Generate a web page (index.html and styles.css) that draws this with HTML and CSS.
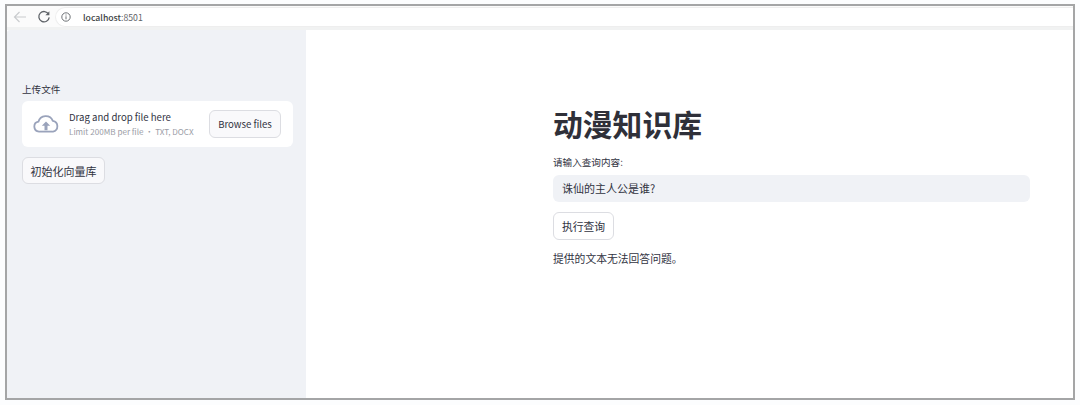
FILE: index.html
```html
<!DOCTYPE html>
<html lang="zh">
<head>
<meta charset="utf-8">
<title>动漫知识库</title>
<link rel="stylesheet" href="styles.css">
</head>
<body>
<div class="frame">
  <header class="toolbar">
    <svg class="nav-back" width="16" height="14" viewBox="0 0 16 14"><path d="M14 7H2.5M7.5 2 2.5 7l5 5" fill="none" stroke="#c9cbce" stroke-width="1.2"/></svg>
    <svg class="nav-reload" width="14" height="14" viewBox="0 0 14 14"><path d="M11.6 4.2A5.2 5.2 0 1 0 12.2 7.4" fill="none" stroke="#5f6368" stroke-width="1.3"/><path d="M12.4 1.2v4H8.4z" fill="#5f6368"/></svg>
    <div class="url">
      <svg width="10" height="10" viewBox="0 0 10 10"><circle cx="5" cy="5" r="4.2" fill="none" stroke="#5f6368" stroke-width="0.9"/><path d="M5 4.3v3M5 2.5v1" stroke="#5f6368" stroke-width="0.9"/></svg>
      <span class="url-text">localhost<span class="url-port">:8501</span></span>
    </div>
  </header>
  <div class="app">
    <aside class="sidebar">
      <div class="upload-label">上传文件</div>
      <div class="dropzone">
        <svg class="cloud" width="26" height="18" viewBox="0 0 26 18"><path d="M7 16.6H6A5 5 0 0 1 5.4 6.7 7.6 7.6 0 0 1 19.8 5.8 5.5 5.5 0 0 1 20 16.6H19" fill="none" stroke="#9aa3bb" stroke-width="1.8"/><path d="M7 16.6H19" stroke="#9aa3bb" stroke-width="1.8"/><path d="M13 6.4 8.8 10.8h2.7v4.4h3v-4.4h2.7z" fill="#9aa3bb"/></svg>
        <div class="drop-text">
          <div class="drop-title">Drag and drop file here</div>
          <div class="drop-limit">Limit 200MB per file • TXT, DOCX</div>
        </div>
        <button class="btn btn-browse">Browse files</button>
      </div>
      <button class="btn btn-init">初始化向量库</button>
    </aside>
    <main class="main">
      <div class="column">
        <h1 class="title">动漫知识库</h1>
        <label class="query-label">请输入查询内容:</label>
        <div class="query-input">诛仙的主人公是谁?</div>
        <button class="btn btn-run">执行查询</button>
        <p class="answer">提供的文本无法回答问题。</p>
      </div>
    </main>
  </div>
</div>
</body>
</html>
```
FILE: styles.css
```css
* { box-sizing: border-box; }
html, body { margin: 0; height: 100%; background: #fcfdfe; overflow: hidden; }
body {
  padding: 4px 5px 5px 5px;
  font-family: "Noto Sans CJK SC", "Noto Sans", sans-serif;
  color: #31333f;
}
.frame {
  height: 396px;
  border: 2px solid #a4a5a6;
  background: #fff;
  display: flex;
  flex-direction: column;
}
.toolbar {
  height: 24px;
  flex: none;
  background: #fbfbfb;
  border-bottom: 3px solid #f1f2f2;
  display: flex;
  align-items: center;
  padding-left: 5px;
}
.nav-back { margin-right: 9px; }
.nav-reload { margin-right: 4px; }
.url {
  flex: 1;
  height: 20px;
  margin-top: 1px;
  background: #fff;
  border: 1px solid #eeeeee;
  border-right: 0;
  border-radius: 10px 0 0 10px;
  display: flex;
  align-items: center;
  gap: 7px;
  padding-left: 5px;
  font-size: 8.7px;
}
.url svg { flex: none; margin-right: 5px; }
.url-text { color: #3c3f43; font-weight: 500; }
.url-port { color: #5f6368; font-weight: 400; }
.app { flex: 1; display: flex; min-height: 0; }
.sidebar {
  width: 299px;
  flex: none;
  background: #f0f2f6;
  border-top-left-radius: 3px;
  padding: 52px 13px 0 15px;
}
.upload-label { font-size: 9.6px; line-height: 14px; margin-bottom: 5px; }
.dropzone {
  height: 46px;
  background: #fff;
  border-radius: 6px;
  display: flex;
  align-items: center;
  padding: 0 12px 0 11px;
}
.cloud { flex: none; margin: 0 10px 0 0; }
.drop-text { flex: 1; }
.drop-title { font-size: 9.6px; line-height: 14px; color: #31333f; margin-bottom: 2px; }
.drop-limit { font-size: 8.1px; line-height: 12px; color: #9a9ca6; white-space: nowrap; }
.btn {
  font-family: inherit;
  color: #31333f;
  background: #fff;
  border: 1px solid #dcdde2;
  border-radius: 6px;
  padding: 0;
  display: block;
}
.btn-browse { width: 72px; height: 28px; font-size: 9.6px; background: #f9f9fb; flex: none; }
.btn-init { width: 83px; height: 27px; margin-top: 10px; font-size: 11px; background: #f9f9fb; }
.main { flex: 1; min-width: 0; }
.column { width: 477px; margin-left: 247px; padding-top: 72px; }
.title { margin: 0; font-size: 29.8px; line-height: 42px; font-weight: 700; color: #2f3039; }
.query-label { display: block; font-size: 9.6px; line-height: 14px; margin-top: 11px; }
.query-input {
  height: 27px;
  margin-top: 6px;
  background: #f0f2f6;
  border-radius: 6px;
  padding-left: 9px;
  font-size: 11px;
  line-height: 26px;
}
.btn-run { width: 61px; height: 28px; margin-top: 10px; font-size: 10.8px; }
.answer { margin: 11px 0 0; font-size: 10.8px; line-height: 14px; }
```
